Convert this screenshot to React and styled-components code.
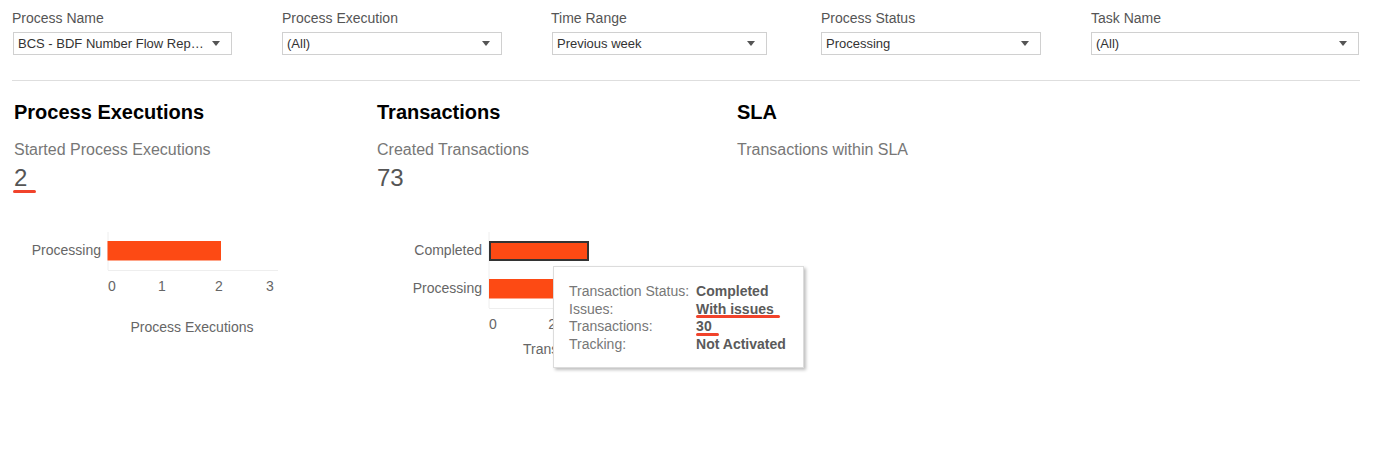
import React from "react";
import styled, { createGlobalStyle } from "styled-components";

const Global = createGlobalStyle`
  html, body { margin: 0; padding: 0; background: #fff; }
  body { font-family: "Liberation Sans", Arial, sans-serif; }
`;

const Page = styled.div`
  padding: 0 17px 0 12px;
  width: 1377px;
  min-height: 456px;
  box-sizing: border-box;
`;

const Filters = styled.div`
  display: grid;
  grid-template-columns: 270px 269px 270px 270px 1fr;
  padding-top: 10px;
`;

const Filter = styled.div`
  display: flex;
  flex-direction: column;
`;

const FilterLabel = styled.div`
  font-size: 14px;
  line-height: 16px;
  color: #555;
  margin-bottom: 6px;
`;

const Select = styled.div`
  width: ${(p) => p.$w}px;
  height: 23px;
  box-sizing: border-box;
  border: 1px solid #d0d0d0;
  margin-left: ${(p) => p.$ml || 0}px;
  display: flex;
  align-items: center;
  justify-content: space-between;
  padding: 0 11px 0 4px;
  font-size: 13px;
  color: #333;
  background: #fff;
`;

const Caret = styled.span`
  width: 0;
  height: 0;
  border-left: 4px solid transparent;
  border-right: 4px solid transparent;
  border-top: 5px solid #555;
  flex: none;
`;

const Divider = styled.div`
  height: 1px;
  background: #dedede;
  margin-top: 25px;
`;

const Sections = styled.div`
  display: grid;
  grid-template-columns: 363px 360px 1fr;
  padding-left: 2px;
  padding-top: 19px;
`;

const Section = styled.div`
  display: flex;
  flex-direction: column;
`;

const Heading = styled.h2`
  margin: 0;
  font-size: 20px;
  line-height: 24px;
  font-weight: 700;
  color: #000;
`;

const Subtitle = styled.div`
  font-size: 16px;
  line-height: 20px;
  color: #777;
  margin-top: 16px;
`;

const Value = styled.div`
  font-size: 24px;
  line-height: 28px;
  height: 28px;
  color: #555;
  margin-top: 4px;
`;

const Marked = styled.span`
  position: relative;
  display: inline-block;
  &::after {
    content: "";
    position: absolute;
    left: ${(p) => p.$l}px;
    top: ${(p) => p.$t}px;
    width: ${(p) => p.$w}px;
    height: 3px;
    border-radius: 2px;
    background: #f1432b;
  }
`;

const ChartWrap = styled.div`
  position: relative;
  margin-top: 33px;
  height: 140px;
`;

const Tooltip = styled.div`
  position: absolute;
  left: 176px;
  top: 41px;
  width: 251px;
  height: 102px;
  box-sizing: border-box;
  background: #fff;
  border: 1px solid #dcdcdc;
  box-shadow: 2px 2px 3px rgba(0, 0, 0, 0.25);
  padding: 16px 15px;
  display: grid;
  grid-template-columns: auto 1fr;
  grid-auto-rows: 17.5px;
  column-gap: 7px;
  font-size: 14px;
  line-height: 17.5px;
`;

const TipLabel = styled.div`
  color: #777;
`;

const TipValue = styled.div`
  color: #5a5a5a;
  font-weight: 700;
`;

const BAR = "#fd4a14";
const TXT = "#666";

function ExecutionsChart() {
  return (
    <svg width="300" height="140" style={{ display: "block" }}>
      <line x1="94" y1="7" x2="94" y2="45" stroke="#eee" />
      <line x1="94" y1="45.5" x2="264" y2="45.5" stroke="#eee" />
      <rect x="93.5" y="16" width="113.5" height="19.5" fill={BAR} />
      <g fontFamily="Liberation Sans, Arial, sans-serif" fontSize="14" fill={TXT}>
        <text x="87" y="30" textAnchor="end">Processing</text>
        <text x="98" y="66" textAnchor="middle">0</text>
        <text x="148" y="66" textAnchor="middle">1</text>
        <text x="205" y="66" textAnchor="middle">2</text>
        <text x="256" y="66" textAnchor="middle">3</text>
        <text x="178" y="107" textAnchor="middle">Process Executions</text>
      </g>
    </svg>
  );
}

function TransactionsChart() {
  return (
    <svg width="340" height="140" style={{ display: "block" }}>
      <line x1="112" y1="7" x2="112" y2="83" stroke="#eee" />
      <line x1="112" y1="83.5" x2="300" y2="83.5" stroke="#eee" />
      <rect x="113" y="17" width="98" height="18" fill={BAR} stroke="#333" strokeWidth="2" />
      <rect x="112" y="54" width="143" height="19.5" fill={BAR} />
      <g fontFamily="Liberation Sans, Arial, sans-serif" fontSize="14" fill={TXT}>
        <text x="105" y="30" textAnchor="end">Completed</text>
        <text x="105" y="68" textAnchor="end">Processing</text>
        <text x="116" y="104" textAnchor="middle">0</text>
        <text x="179" y="104" textAnchor="middle">20</text>
        <text x="245" y="104" textAnchor="middle">40</text>
        <text x="146" y="129">Transactions</text>
      </g>
    </svg>
  );
}

const filters = [
  { label: "Process Name", value: "BCS - BDF Number Flow Rep…", w: 219, ml: 1 },
  { label: "Process Execution", value: "(All)", w: 220 },
  { label: "Time Range", value: "Previous week", w: 215, ml: 1 },
  { label: "Process Status", value: "Processing", w: 220 },
  { label: "Task Name", value: "(All)", w: 268 },
];

export default function App() {
  return (
    <>
      <Global />
      <Page>
        <Filters>
          {filters.map((f) => (
            <Filter key={f.label}>
              <FilterLabel>{f.label}</FilterLabel>
              <Select $w={f.w} $ml={f.ml}>
                <span>{f.value}</span>
                <Caret />
              </Select>
            </Filter>
          ))}
        </Filters>
        <Divider />
        <Sections>
          <Section>
            <Heading>Process Executions</Heading>
            <Subtitle>Started Process Executions</Subtitle>
            <Value>
              <Marked $l={-1} $t={26} $w={23}>2</Marked>
            </Value>
            <ChartWrap>
              <ExecutionsChart />
            </ChartWrap>
          </Section>
          <Section>
            <Heading>Transactions</Heading>
            <Subtitle>Created Transactions</Subtitle>
            <Value>73</Value>
            <ChartWrap>
              <TransactionsChart />
              <Tooltip>
                <TipLabel>Transaction Status:</TipLabel>
                <TipValue>Completed</TipValue>
                <TipLabel>Issues:</TipLabel>
                <TipValue>
                  <Marked $l={0} $t={14} $w={84}>With issues</Marked>
                </TipValue>
                <TipLabel>Transactions:</TipLabel>
                <TipValue>
                  <Marked $l={0} $t={15} $w={23}>30</Marked>
                </TipValue>
                <TipLabel>Tracking:</TipLabel>
                <TipValue>Not Activated</TipValue>
              </Tooltip>
            </ChartWrap>
          </Section>
          <Section>
            <Heading>SLA</Heading>
            <Subtitle>Transactions within SLA</Subtitle>
          </Section>
        </Sections>
      </Page>
    </>
  );
}
